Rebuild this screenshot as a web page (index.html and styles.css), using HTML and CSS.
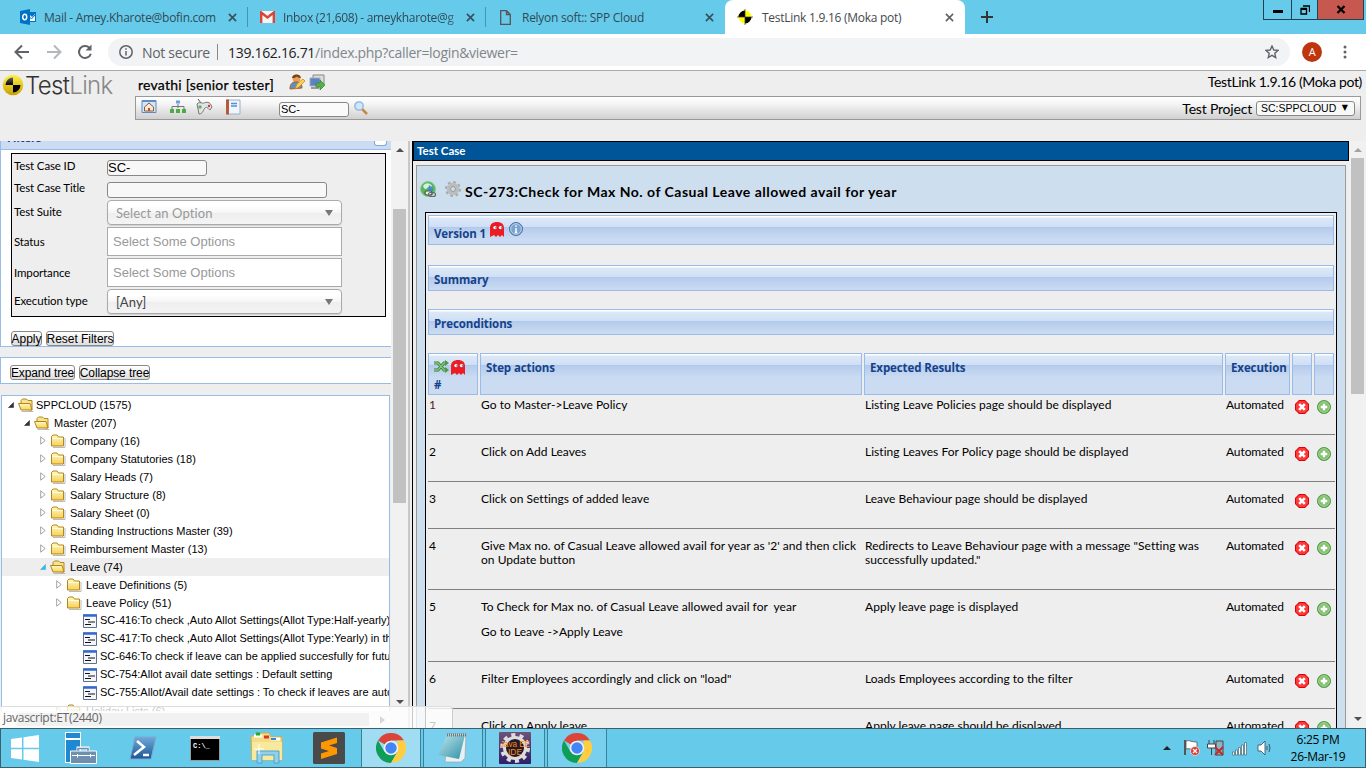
FILE: index.html
```html
<!DOCTYPE html>
<html lang="en">
<head>
<meta charset="utf-8">
<title>TestLink 1.9.16 (Moka pot)</title>
<link rel="stylesheet" href="styles.css">
</head>
<body>
<svg width="0" height="0" class="defs">
<defs>
<linearGradient id="gold" x2="0" y2="1"><stop stop-color="#fffbc0"/><stop offset="1" stop-color="#f7cf58"/></linearGradient>
<linearGradient id="psg" x2="0" y2="1"><stop stop-color="#6fa9da"/><stop offset="1" stop-color="#1b5796"/></linearGradient>
<linearGradient id="note" x2="1" y2="1"><stop stop-color="#bfe8ee"/><stop offset="1" stop-color="#2f8fa5"/></linearGradient>
<linearGradient id="jav" x2="0" y2="1"><stop stop-color="#6d5378"/><stop offset="1" stop-color="#2f1f68"/></linearGradient>
<linearGradient id="yel" x2="0" y2="1"><stop stop-color="#fff04a"/><stop offset="1" stop-color="#c8a000"/></linearGradient>
<linearGradient id="blk" x2="0" y2="1"><stop stop-color="#666"/><stop offset=".5" stop-color="#000"/></linearGradient>
<symbol id="x" viewBox="0 0 10 10"><path d="M1 1l8 8M9 1l-8 8" stroke="currentColor" stroke-width="1.8"/></symbol>
<symbol id="folder" viewBox="0 0 16 16"><path d="M3 14.500h12V5" stroke="#bbb" fill="none"/><path d="M1.500 13V3.500l1.500-1.500h4l1.500 2h5v9H2z" fill="url(#gold)" stroke="#b5851d"/><path d="M2.500 5.500h10.500" stroke="#fffde0"/></symbol>
<symbol id="open" viewBox="0 0 16 16"><path d="M3.500 14.500h12" stroke="#bbb"/><path d="M3 12V3.500l1.500-1.500h4l1.500 1.500h4V13z" fill="#f5e391" stroke="#b5851d"/><path d="M.5 6.500H12l2 6.500H3z" fill="url(#gold)" stroke="#b5851d"/></symbol>
<symbol id="closed" viewBox="0 0 6 9"><path d="M.7.8l4.500 3.700L.7 8.200z" fill="#fff" stroke="#999" stroke-width=".9"/></symbol>
<symbol id="down" viewBox="0 0 6 6"><path d="M5.500.5v5h-5z" fill="currentColor" stroke="currentColor" stroke-width=".6"/></symbol>
<symbol id="case" viewBox="0 0 14 14"><path d="M.5 1h13v12.500H.5z" fill="#f4f6fb" stroke="#5f708c"/><path d="M0 1.500h14" stroke="#3569d0" stroke-width="2.500"/><path d="M2 5.500h5M5 8h7M2 10.500h6" stroke="#111"/></symbol>
<symbol id="ghost" viewBox="0 0 14 15"><path d="M0 15V6C0 2 3 0 7 0s7 2 7 6v9l-2-2-2 2-2-2-2 2-2-2z" fill="#ed1c24"/><circle cx="5" cy="5.600" r="1.700" fill="#fff"/><circle cx="10.500" cy="5.600" r="1.700" fill="#fff"/><path d="M5.300 5h1.500v1.500H5.300zM10.800 5h1.500v1.500h-1.500z" fill="#39a"/></symbol>
<symbol id="del" viewBox="0 0 14 14"><path d="M4 0h6l4 4v6l-4 4H4l-4-4V4z" fill="#e0000c"/><path d="M4.300 1h5.400L13 4.300v5.400L9.700 13H4.300L1 9.700V4.300z" fill="#fb3a3a"/><path d="M4.200 4.200l5.600 5.600M9.800 4.200l-5.600 5.600" stroke="#fff" stroke-width="2.600"/></symbol>
<symbol id="add" viewBox="0 0 14 14"><circle cx="7" cy="7" r="6.600" fill="#5aa648" stroke="#3d8a34" stroke-width=".7"/><circle cx="7" cy="7" r="5.400" fill="#80c16d" stroke="#b6dcaa" stroke-width=".8"/><path d="M7 3.700v6.600M3.700 7h6.600" stroke="#fff" stroke-width="2.400"/></symbol>
<symbol id="chrome" viewBox="0 0 30 30"><path d="M15 15 2 7.500A15 15 0 0 1 28 7.500H15z" fill="#db4437"/><path d="M2 7.500A15 15 0 0 0 15 30l6.500-11.250L15 15 8.500 18.750z" fill="#109d58"/><path d="M28 7.500A15 15 0 0 1 15 30l6.500-11.250V7.500z" fill="#ffcd40"/><circle cx="15" cy="15" r="7.300" fill="#f1f1f1"/><circle cx="15" cy="15" r="5.700" fill="#4285f4"/></symbol>
<symbol id="bmw" viewBox="0 0 16 16"><circle cx="8" cy="8" r="6.500" fill="#ff0"/><path d="M8 8V1.500A6.500 6.500 0 0 0 1.500 8zM8 8v6.500A6.500 6.500 0 0 0 14.500 8z" fill="#000"/><path d="M8 0v16M0 8h16" stroke="#333" stroke-width=".7"/></symbol>
</defs></svg>

<div class="tabs">
  <div class="tab t1"><svg class="fav" width="16" height="16"><path d="M8 3h8v10H8z" fill="#0072c6"/><path d="M9 5l3 3 3-3v7H9z" fill="#fff"/><path d="M9.500 8l2 2 3.500-4" fill="none" stroke="#0072c6"/><path d="M0 2l10-2v16L0 14z" fill="#0072c6"/><ellipse cx="4.700" cy="8" rx="2" ry="2.700" fill="none" stroke="#fff" stroke-width="1.500"/></svg><span class="tt">Mail - Amey.Kharote@bofin.com</span><svg class="cl"><use href="#x"/></svg></div>
  <div class="tab t2"><svg class="fav" width="15" height="12"><path d="M0 0h15v12H0z" fill="#f5f5f5"/><path d="M1.200 12V1.500l6.300 5 6.300-5V12" fill="none" stroke="#db4437" stroke-width="2.400"/></svg><span class="tt fade">Inbox (21,608) - ameykharote@g</span><svg class="cl"><use href="#x"/></svg></div>
  <div class="tab t3"><svg class="fav" width="11" height="15"><path d="M.7.7h5.800l3.800 3.800v9.800H.7zM6.500.7v3.800h3.800" fill="none" stroke="#555" stroke-width="1.300"/></svg><span class="tt">Relyon soft:: SPP Cloud</span><svg class="cl"><use href="#x"/></svg></div>
  <div class="tab t4"><svg class="fav" width="16" height="16"><use href="#bmw"/></svg><span class="tt">TestLink 1.9.16 (Moka pot)</span><svg class="cl"><use href="#x"/></svg></div>
  <svg class="plus" width="12" height="12"><path d="M6 0v12M0 6h12" stroke="#333" stroke-width="2"/></svg>
  <div class="win"><span class="wb w1"><i></i></span><span class="wb w2"><svg width="10" height="10"><path d="M3 1h6.500v6M1 3.500h5.500V9H1z" fill="none" stroke="#000" stroke-width="1.300"/><path d="M1 4h6" stroke="#000" stroke-width="2"/></svg></span><span class="wb w3"><svg width="10" height="9"><path d="M1.500 1l7 7M8.500 1l-7 7" stroke="#000" stroke-width="2.300"/></svg></span></div>
</div>

<div class="toolbar">
  <svg class="nav" width="96" height="18" fill="none" stroke-width="2"><path d="M15 9H2M8 2.500L1.500 9 8 15.500" stroke="#5f6368"/><path d="M33 9h13M40 2.500L46.500 9 40 15.500" stroke="#b5b8bb"/><path d="M75.300 4.700a6 6 0 1 0 1.500 6" stroke="#5f6368"/><path d="M77.500 1.500v6h-6z" fill="#5f6368"/></svg>
  <div class="omni"><svg width="14" height="14"><circle cx="7" cy="7" r="6.200" fill="none" stroke="#5f6368" stroke-width="1.500"/><path d="M7 6v4.500M7 3.300v1.500" stroke="#5f6368" stroke-width="1.500"/></svg><span class="ns">Not secure</span><i></i><span class="url"><b>139.162.16.71</b>/index.php?caller=login&amp;viewer=</span><svg class="star" width="14" height="14"><path d="M7 1l1.800 4 4.200.4-3.200 2.900.9 4.300L7 10.300l-3.700 2.300.9-4.300L1 5.400 5.200 5z" fill="none" stroke="#5f6368" stroke-width="1.400"/></svg></div>
  <span class="avatar">A</span>
  <svg class="dots" width="4" height="14"><circle cx="2" cy="2" r="1.500"/><circle cx="2" cy="7" r="1.500"/><circle cx="2" cy="12" r="1.500"/></svg>
</div>

<div class="head">
  <div class="logo"><svg width="22" height="22"><circle cx="11" cy="11" r="10.300" fill="url(#yel)"/><path d="M11 11V3.500A7.500 7.500 0 0 0 3.500 11zM11 11v7.500a7.500 7.500 0 0 0 7.500-7.500z" fill="url(#blk)"/></svg><span>Test<em>Link</em></span></div>
  <div class="hr">
    <div class="user"><span class="uname">revathi [senior tester]</span>
      <svg width="17" height="17"><circle cx="7.500" cy="4.500" r="4" fill="#e5a15a"/><path d="M3 4c0-4 8-5 9 0-3 0-4-2-5-1S5 4 3 4" fill="#7a4311"/><path d="M1 15c0-6 3-7 6-7s6 1 6 6z" fill="#5a8fd0" stroke="#b05b1c"/><path d="M6 15l2-5 6-5 2 2-6 6z" fill="#fbd354" stroke="#c98a20" stroke-width=".8"/></svg>
      <svg width="17" height="17"><path d="M4 1h11v9H4z" fill="#ddd" stroke="#888"/><path d="M1 4h10v8H1z" fill="#5585c8" stroke="#aaa"/><path d="M2 14h8" stroke="#999" stroke-width="2"/><path d="M7 9h4V6l5 5-5 5v-3H7z" fill="#55b04a" stroke="#338033" stroke-width=".7"/></svg>
      <span class="ver">TestLink 1.9.16 (Moka pot)</span></div>
    <div class="bar">
      <svg width="104" height="18"><path d="M1 1.500h14v12H1z" fill="#d5e4f7" stroke="#6389b8"/><path d="M1 2h14" stroke="#5d8dcb" stroke-width="2"/><path d="M3.500 12V8L8 4l4.500 4v4z" fill="#f8ead4" stroke="#8b5a35"/><path d="M7 9h2v3H7z" fill="#a54"/><path d="M35 1.500h4v3h-4z" fill="#6aa0df"/><path d="M37 5v4M31 10V7.500h12V10" fill="none" stroke="#777"/><path d="M35 10h4v4h-4zM41 10h4v4h-4zM29 10h4v4h-4z" fill="#4aad45"/><path d="M57 0l3 4" stroke="#555"/><path d="M56 5c3-3 5 0 7-1s6-2 8 4l-2 3c-2-1-3-4-5-2s-2 6-6 6z" fill="#e3e3e3" stroke="#777"/><path d="M59 6v4M57 8h4" stroke="#3aa24a"/><circle cx="68" cy="7" r="1.200" fill="#c33"/><path d="M86 1h13v14H86z" fill="#eef5ff" stroke="#9bb0ca"/><path d="M85 .5h3v15h-3z" fill="#b65a3a"/><path d="M90 4.500h6M90 7h6" stroke="#5d8dcb" stroke-width="1.500"/></svg>
      <span class="sc">SC-</span>
      <svg width="14" height="14"><path d="M8 8l5 5" stroke="#c9883f" stroke-width="2.500"/><circle cx="5" cy="5" r="4.200" fill="#cfe6fb" stroke="#8eb3e0" stroke-width="1.300"/></svg>
      <span class="tp">Test Project</span><span class="proj">SC:SPPCLOUD <b>▼</b></span>
    </div>
  </div>
</div>

<div class="main">
  <div class="left">
    <div class="pane">
      <div class="fh"><span>Filters</span><i></i></div>
      <div class="filters">
        <div class="fbox">
          <div class="fr a"><label>Test Case ID</label><span class="in s">SC-</span></div>
          <div class="fr b"><label>Test Case Title</label><span class="in"></span></div>
          <div class="fr c"><label>Test Suite</label><span class="sel">Select an Option<i></i></span></div>
          <div class="fr d"><label>Status</label><span class="multi">Select Some Options</span></div>
          <div class="fr d"><label>Importance</label><span class="multi">Select Some Options</span></div>
          <div class="fr c"><label>Execution type</label><span class="sel any">[Any]<i></i></span></div>
        </div>
        <div class="btns"><span class="btn w31">Apply</span><span class="btn w68">Reset Filters</span></div>
      </div>
      <div class="treebar"><span class="btn w65">Expand tree</span><span class="btn w71">Collapse tree</span></div>
      <div class="tree">
        <div class="n l0"><svg class="dn"><use href="#down"/></svg><svg class="fo"><use href="#open"/></svg>SPPCLOUD (1575)</div>
        <div class="n l1"><svg class="dn"><use href="#down"/></svg><svg class="fo"><use href="#open"/></svg><span>Master (207)</span></div>
        <div class="n l2"><svg class="ar"><use href="#closed"/></svg><svg class="fo"><use href="#folder"/></svg>Company (16)</div>
        <div class="n l2"><svg class="ar"><use href="#closed"/></svg><svg class="fo"><use href="#folder"/></svg>Company Statutories (18)</div>
        <div class="n l2"><svg class="ar"><use href="#closed"/></svg><svg class="fo"><use href="#folder"/></svg>Salary Heads (7)</div>
        <div class="n l2"><svg class="ar"><use href="#closed"/></svg><svg class="fo"><use href="#folder"/></svg>Salary Structure (8)</div>
        <div class="n l2"><svg class="ar"><use href="#closed"/></svg><svg class="fo"><use href="#folder"/></svg>Salary Sheet (0)</div>
        <div class="n l2"><svg class="ar"><use href="#closed"/></svg><svg class="fo"><use href="#folder"/></svg>Standing Instructions Master (39)</div>
        <div class="n l2"><svg class="ar"><use href="#closed"/></svg><svg class="fo"><use href="#folder"/></svg>Reimbursement Master (13)</div>
        <div class="n l2 hot"><svg class="dn"><use href="#down"/></svg><svg class="fo"><use href="#open"/></svg>Leave (74)</div>
        <div class="n l3"><svg class="ar"><use href="#closed"/></svg><svg class="fo"><use href="#folder"/></svg>Leave Definitions (5)</div>
        <div class="n l3"><svg class="ar"><use href="#closed"/></svg><svg class="fo"><use href="#folder"/></svg>Leave Policy (51)</div>
        <div class="n l4"><svg class="ca"><use href="#case"/></svg>SC-416:To check ,Auto Allot Settings(Allot Type:Half-yearly)</div>
        <div class="n l4"><svg class="ca"><use href="#case"/></svg>SC-417:To check ,Auto Allot Settings(Allot Type:Yearly) in th</div>
        <div class="n l4"><svg class="ca"><use href="#case"/></svg>SC-646:To check if leave can be applied succesfully for futu</div>
        <div class="n l4"><svg class="ca"><use href="#case"/></svg>SC-754:Allot avail date settings : Default setting</div>
        <div class="n l4"><svg class="ca"><use href="#case"/></svg>SC-755:Allot/Avail date settings : To check if leaves are auto</div>
        <div class="n l3"><svg class="ar"><use href="#closed"/></svg><svg class="fo"><use href="#folder"/></svg>Holiday Lists (6)</div>
      </div>
      <div class="hscroll"><b></b><i></i></div>
    </div>
    <div class="scroll sl"><i class="up"></i><b></b><i class="dw"></i></div>
  </div>
  <div class="right">
    <div class="work">
      <h1>Test Case</h1>
      <div class="panel">
        <div class="title">
          <svg width="17" height="17"><circle cx="8" cy="8" r="7.500" fill="#58b55c" stroke="#8fcf92"/><path d="M3 5c3-4 7-3 9 0-2 3-4 0-5 2S4 8 3 5" fill="#d5efe2"/><path d="M9 4l4 3v3H8z" fill="#3f8fd0"/><rect x="5" y="10" width="7" height="4" rx="2" fill="#eee" stroke="#555" stroke-width="1.200"/><rect x="8.500" y="11.500" width="7" height="4" rx="2" fill="none" stroke="#666" stroke-width="1.200"/></svg>
          <svg width="17" height="17"><circle cx="8" cy="8" r="6.700" fill="none" stroke="#aaa" stroke-width="2.600" stroke-dasharray="2.600 2.660"/><circle cx="8" cy="8" r="4.500" fill="none" stroke="#bdbdbd" stroke-width="3.500"/><circle cx="8" cy="8" r="2.500" fill="#cddeee" stroke="#888" stroke-width=".8"/></svg>
          <span>SC-273:Check for Max No. of Casual Leave allowed avail for year</span></div>
        <div class="box">
          <div class="x v"><span>Version 1</span><svg width="14" height="15"><use href="#ghost"/></svg><svg width="14" height="14"><circle cx="7" cy="7" r="6.500" fill="#5482b8" stroke="#4472a8"/><circle cx="7" cy="7" r="5.400" fill="#7ba3d0" stroke="#d9e7f5" stroke-width=".8"/><path d="M7 6v4.500M7 3.300v1.500M5.800 10.500h2.500" stroke="#fff" stroke-width="1.500"/></svg></div>
          <div class="x su"><span>Summary</span></div>
          <div class="x pr"><span>Preconditions</span></div>
          <div class="g gh">
            <div class="x"><svg width="15" height="13" fill="none"><path d="M0 3h4l6 7h3M0 10h4l6-7h3" stroke="#347c30" stroke-width="3"/><path d="M0 3h4l6 7h3M0 10h4l6-7h3" stroke="#87c87c" stroke-width="1.300"/><path d="M11 0l4 3-4 3zM11 7l4 3-4 3z" fill="#4a9b45"/></svg><svg width="14" height="15"><use href="#ghost"/></svg><br><span>#</span></div>
            <div class="x"><span>Step actions</span></div><div class="x"><span>Expected Results</span></div><div class="x"><span>Execution</span></div><div class="x"></div><div class="x"></div>
          </div>
          <div class="g r first"><p><u>1</u></p><p>Go to Master-&gt;Leave Policy</p><p>Listing Leave Policies page should be displayed</p><p class="au">Automated</p><svg><use href="#del"/></svg><svg><use href="#add"/></svg></div>
          <div class="g r"><p>2</p><p>Click on Add Leaves</p><p>Listing Leaves For Policy page should be displayed</p><p class="au">Automated</p><svg><use href="#del"/></svg><svg><use href="#add"/></svg></div>
          <div class="g r"><p>3</p><p>Click on Settings of added leave</p><p>Leave Behaviour page should be displayed</p><p class="au">Automated</p><svg><use href="#del"/></svg><svg><use href="#add"/></svg></div>
          <div class="g r r4"><p>4</p><p>Give Max no. of Casual Leave allowed avail for year as '2' and then click<br>on Update button</p><p>Redirects to Leave Behaviour page with a message "Setting was<br>successfully updated."</p><p class="au">Automated</p><svg><use href="#del"/></svg><svg><use href="#add"/></svg></div>
          <div class="g r r5"><p>5</p><div><p>To Check for Max no. of Casual Leave allowed avail for&nbsp; year</p><p class="p2">Go to Leave -&gt;Apply Leave</p></div><p>Apply leave page is displayed</p><p class="au">Automated</p><svg><use href="#del"/></svg><svg><use href="#add"/></svg></div>
          <div class="g r"><p>6</p><p>Filter Employees accordingly and click on "load"</p><p>Loads Employees according to the filter</p><p class="au">Automated</p><svg><use href="#del"/></svg><svg><use href="#add"/></svg></div>
          <div class="g r"><p>7</p><p>Click on Apply leave</p><p>Apply leave page should be displayed</p><p class="au">Automated</p><svg><use href="#del"/></svg><svg><use href="#add"/></svg></div>
        </div>
      </div>
    </div>
    <div class="scroll sr"><i class="up"></i><b></b><i class="dw"></i></div>
  </div>
  <div class="status">javascript:ET(2440)</div>
</div>

<div class="task">
  <div class="start"><svg width="28" height="27"><path d="M0 4l11-1.500v10.300H0zM12.500 2.200L28 0v12.800H12.500zM0 14.200h11v10.300L0 23zM12.500 14.200H28V27l-15.500-2.200z" fill="#fff"/></svg></div>
  <div class="slot"><svg width="32" height="32"><path d="M0 0h16v31H0z" fill="#fff"/><path d="M1 1h14v5H1zM1 8h14v22H1z" fill="#1e88d2"/><path d="M5.500 19h26v12.500h-26z" fill="#6e8fae" stroke="#fff"/><path d="M13 19v-3h10v3" fill="none" stroke="#fff" stroke-width="3"/><path d="M13 19v-2.500h10V19" fill="none" stroke="#6e8fae" stroke-width="1.500"/><path d="M7 23.500h23M12.500 22v3.500M25.500 22v3.500" stroke="#fff"/></svg></div>
  <div class="slot"><svg width="28" height="24"><path d="M6 1h21l-5 22H1z" fill="url(#psg)" stroke="#7cabcf"/><path d="M8 5l7 6-10 8M14 19h6" fill="none" stroke="#fff" stroke-width="2.500"/></svg></div>
  <div class="slot"><svg width="30" height="25"><path d="M0 0h30v25H0z" fill="#999"/><path d="M1 3h28v21H1z" fill="#000"/><path d="M0 1.500h30" stroke="#ddd" stroke-width="3"/><text x="3" y="12" class="cmd">C:\_</text></svg></div>
  <div class="slot"><svg width="34" height="32"><path d="M1 4h8l2-3h8l2 4h11v23H2z" fill="#f4dc82" stroke="#d3ad48"/><path d="M4 4h8M21 7h9" stroke="#fff" stroke-width="3"/><path d="M6 2h4" stroke="#2ba52b" stroke-width="3"/><path d="M14 5h5" stroke="#d8382b" stroke-width="3"/><path d="M21 7h5" stroke="#2e8ae0" stroke-width="2"/><path d="M2 10h30v18H2z" fill="#f9e99f"/><path d="M7 31V19h22v12h-5v-8H12v8z" fill="#8fd0ee" stroke="#4fa3cb"/><path d="M9 12v10M4 17h10" stroke="#fff"/></svg></div>
  <div class="slot"><svg width="32" height="32"><rect width="32" height="32" rx="1.500" fill="#4a4a4a"/><path d="M24 5.500L8 10.500v6l8 2.500-8 2.500v5.500l16-5v-6L16 13.500l8-2.500z" fill="#ff9800"/></svg></div>
  <div class="slot app act"><svg width="30" height="30"><use href="#chrome"/></svg></div>
  <div class="slot app"><svg width="32" height="32"><path d="M11 2h18l-1 24-4 4H8z" fill="#e9f0f2" stroke="#999" stroke-width=".6"/><path d="M10 3h18l-6 24-21-4z" fill="url(#note)"/><path d="M10 3h19" stroke="#777" stroke-width="3" stroke-dasharray="1 1"/></svg></div>
  <div class="slot app"><svg width="32" height="32"><rect width="32" height="32" rx="1" fill="url(#jav)"/><circle cx="16" cy="16" r="13" fill="none" stroke="#ddd" stroke-width="4" stroke-dasharray="4 4.170"/><circle cx="16" cy="16" r="10.500" fill="#221b25" stroke="#ddd" stroke-width="3"/><text x="1" y="15" class="jv" textLength="30" lengthAdjust="spacingAndGlyphs">Java EE</text><text x="9" y="23" class="jv" textLength="14" lengthAdjust="spacingAndGlyphs">IDE</text></svg></div>
  <div class="slot app"><svg width="30" height="30"><use href="#chrome"/></svg></div>
  <svg class="tray" width="90" height="18"><path d="M0 11l4-4 4 4z" fill="#222"/><path d="M22 1v15" stroke="#555" stroke-width="2"/><path d="M23 2c4-1 5 1 11 1v8c-5 0-6-2-11-1z" fill="#fff" stroke="#555" stroke-width=".8"/><circle cx="32" cy="12" r="4.500" fill="#dd3d35" stroke="#fff" stroke-width=".6"/><path d="M30 10l4 4M34 10l-4 4" stroke="#fff" stroke-width="1.300"/><path d="M46 1v4M51 1v4M44.500 5h8v4h-8zM48.500 9v7" fill="#fff" stroke="#444"/><path d="M53 2h7v14h-7z" fill="#8eb4c2" stroke="#444"/><path d="M52 8l8 8M60 8l-8 8" stroke="#c5282c" stroke-width="2"/><path d="M69.500 13h2v3h-2zM72.500 11h2v5h-2zM75.500 8.500h2V16h-2zM78.500 6h2v10h-2zM81.500 3.500h2V16h-2z" fill="#fff" stroke="#4a6570" stroke-width=".7"/></svg>
  <svg class="spk" width="14" height="16"><path d="M1 5h3l4-4v14l-4-4H1z" fill="#fff" stroke="#456" stroke-width=".9"/><path d="M10 6v4M12 4q2 4 0 8" fill="none" stroke="#456"/></svg>
  <div class="clock"><span>6:25 PM</span><span>26-Mar-19</span></div>
</div>
</body>
</html>
```
FILE: styles.css
```css
*{box-sizing:border-box}
body{margin:0;width:1366px;height:768px;overflow:hidden;display:flex;flex-direction:column;background:#eee;color:#000;font-family:Lato,"Open Sans",sans-serif;font-size:12px}
svg{flex:none;display:block}
.defs{position:absolute}
h1,p{margin:0;font-weight:400}

/* browser tabs */
.tabs{height:34px;background:#66caea;display:flex;align-items:center;font-family:"Open Sans",sans-serif;font-size:12px;letter-spacing:-.27px;color:#2f4a55;flex:none}
.tab{display:flex;align-items:center;height:34px;white-space:nowrap}
.tab .tt{margin-left:8px;flex:1}
.cl{width:9px;height:9px;color:#38505a}
.fav{flex:none}
.t1{width:217px;margin-left:20px}
.t2{width:228px;margin-left:10px;border-left:1px solid #4595af;padding-left:12px;height:20px}
.t3{width:229px;margin-left:10px;border-left:1px solid #4595af;padding-left:14px;height:20px}
.t3 .tt{margin-left:11px}
.fade{-webkit-mask-image:linear-gradient(90deg,#000 92%,transparent 102%);letter-spacing:-.33px;margin-right:5px}
.t4{width:240px;margin-left:11px;background:#fff;border-radius:8px 8px 0 0;padding:0 11px 0 12px;color:#45494d}
.t4 .tt{margin-left:9px}
.t4 .cl{color:#5f6368}
.plus{margin-left:16px}
.win{display:flex;margin-left:auto;margin-right:2px;align-self:flex-start}
.wb{height:20px;border:1px solid #23424e;border-top:0;border-left-width:0;display:flex;align-items:center;justify-content:center}
.w1{width:29px;border-left-width:1px}.w1 i{width:10px;height:3px;background:#000;margin-top:4px}
.w2{width:26px}.w3{width:46px;background:#c75850}

/* address bar */
.toolbar{height:36px;background:#fff;display:flex;align-items:center;flex:none;font-family:"Open Sans",sans-serif;font-size:14px;letter-spacing:-.31px}
.nav{margin-left:14px;margin-right:-2px}
.omni{width:1182px;height:28px;border-radius:14px;background:#f1f3f4;display:flex;align-items:center;padding:0 11px;color:#5f6368}
.ns{margin-left:9px;width:67px;white-space:nowrap}
.omni i{width:1px;height:16px;background:#888;margin:0 10px 0 8px}
.url{color:#80868b;white-space:nowrap}.url b{font-weight:400;color:#202124}
.star{margin-left:auto}
.avatar{width:20px;height:20px;border-radius:50%;background:#bf360c;color:#fff;font-size:11px;text-align:center;line-height:20px;margin-left:12px}
.dots{margin-left:21px;fill:#5f6368}

/* TestLink header */
.head{height:71px;border-top:1px solid #aaa;display:flex;flex:none}
.logo{width:135px;display:flex;align-items:flex-start;padding:3px 0 0 2px}
.logo span{font:24px/24px Inter,sans-serif;font-weight:300;color:#333;margin-left:1px;letter-spacing:-.65px}
.logo em{font-style:normal;color:#888}
.hr{flex:1;font-size:14px}
.user{height:25px;display:flex;align-items:center;padding:0 4px 3px 3px}
.uname{width:151px;-webkit-text-stroke:.25px;padding-top:5px;white-space:nowrap;letter-spacing:.24px}
.user svg{margin-right:3px}
.ver{margin:-1px 0 0 auto;white-space:nowrap;letter-spacing:-.35px}
.bar{height:24px;width:1226px;border:1px solid #999;background:linear-gradient(#fff,#f3f3f3 35%,#d0d0d0);display:flex;align-items:center;padding:0 5px 0 5px}
.bar svg{margin-top:-1px}
.sc{width:70px;height:15px;border:1px solid #888;border-radius:3px;background:#fafafa;font:11px/13px "Liberation Sans",sans-serif;padding-left:1px;margin:2px 5px 0 34px}
.tp{margin-left:auto;margin-right:4px;letter-spacing:-.2px}
.proj{width:99px;height:15px;border:1px solid #888;border-radius:3px;background:#f8f8f8;font:10.500px/13px "Liberation Sans",sans-serif;padding-left:4px;display:flex;justify-content:space-between;padding-right:6px;white-space:nowrap}
.proj b{font:8px/12px "DejaVu Sans",sans-serif}

/* frames */
.main{height:587px;display:flex;position:relative;overflow:hidden;flex:none}
.left{width:410px;display:flex;border-right:2px solid #c8c8c8;flex:none}
.pane{width:391px;overflow:hidden}
.fh{height:9px;background:#cbdcf2;border-bottom:1px solid #99bbe8;border-left:1px solid #99bbe8;overflow:hidden;display:flex;justify-content:space-between;font:bold 11px/13px "Open Sans",sans-serif;color:#15428b;padding:0 4px 0 6px}
.fh span{margin-top:-10px}.fh i{width:13px;height:5px;background:#fff;border:1px solid #7fa8df;border-top:0;border-radius:0 0 3px 3px}
.filters{height:197px;background:#fff;border:1px solid #99bbe8;border-top:0;border-right:0;padding:3px 0 0 10px}
.fbox{width:375px;height:164px;border:1px solid #000;background:#eee;padding:1px 2px;font-size:11.500px}
.fr{display:flex}.fr label{width:93px;white-space:nowrap;letter-spacing:-.13px}
.a{height:22px;padding-top:5px}.b{height:24px;padding-top:5px}.c{height:29px}.d{height:31px}
.a label,.b label{margin-top:-1px}.c label{margin-top:4px}.d label{margin-top:5px}
.in{width:220px;height:16px;border:1px solid #888;border-radius:3px;background:#f8f8f8;font:13px/14px "Liberation Sans",sans-serif}
.in.s{width:100px}
.sel{width:235px;height:25px;border:1px solid #aaa;border-radius:4px;background:linear-gradient(#fff 20%,#f6f6f6 50%,#eee 52%,#f4f4f4);box-shadow:0 1px 1px rgba(0,0,0,.12);display:flex;justify-content:space-between;align-items:center;color:#999;font-size:13px;padding:0 8px;letter-spacing:.1px}
.any{color:#444}
.fr.c .sel{margin-top:-1px}
.sel i{border:4px solid transparent;border-top:6px solid #777;border-bottom:0}
.multi{width:235px;height:29px;border:1px solid #aaa;background:#fff;color:#999;font:13px/27px "Liberation Sans",sans-serif;padding-left:5px;margin-top:-3px}
.fr.d+.c .sel{margin-top:-3px}.fr.d+.c label{margin-top:2px}
.btns{display:flex;gap:4px;margin-top:14px}
.btn{height:15px;border:1px solid #888;border-radius:3px;background:linear-gradient(#fff,#ddd);font:12px/14px "Liberation Sans",sans-serif;display:flex;justify-content:center;white-space:nowrap;letter-spacing:-.03px}
.w31{width:31px}.w68{width:68px}.w65{width:65px;letter-spacing:-.15px}.w71{width:71px;letter-spacing:-.1px}
.treebar{margin-top:10px;height:27px;border:1px solid #99bbe8;border-right:0;background:#fff;display:flex;gap:4px;padding:7px 0 0 9px}
.tree{margin-top:11px;width:389px;margin-left:1px;height:316px;border:1px solid #99bbe8;border-bottom:0;background:#fff;font:11px/18px "Liberation Sans",sans-serif;overflow:hidden;white-space:nowrap}
.n{height:18px;display:flex;align-items:center;padding-bottom:1px}
.fo{width:16px;height:16px}.ar{width:6px;height:9px}.dn{width:6px;height:6px;color:#333}.ca{width:14px;height:14px;margin:2px 3px 0 0}
.l0{padding-left:6px}.l1{padding-left:22px}.l2{padding-left:38px}.l3{padding-left:54px}.l4{padding-left:81px;padding-bottom:2px}
.dn,.ar{margin-right:4px}.fo{margin-right:4px}.l0 .fo{margin-right:2px}.l1 .fo{margin-right:4px}
.l2,.l3{letter-spacing:.02px}
.hot{background:#eee}.hot .dn{color:#35b5e8}
.hscroll{height:17px;background:#f1f1f1;display:flex;align-items:center;padding-left:17px}
.hscroll b{width:352px;height:13px;background:#c1c1c1}
.hscroll i{margin-left:11px;border:4px solid transparent;border-left:5px solid #505050;border-right:0}
.scroll{background:#f1f1f1;width:17px;display:flex;flex-direction:column;align-items:center}
.scroll b{width:13px;background:#c1c1c1}
.up{border:4px solid transparent;border-top:0;border-bottom:4px solid #505050}
.dw{border:4px solid transparent;border-bottom:0;border-top:4px solid #505050;margin-top:auto}
.sl .up{margin-top:7px}.sl b{height:294px;margin-top:57px}.sl .dw{margin-bottom:24px}

.right{flex:1;display:flex;border-left:1px solid #000;margin-left:2px}
.work{width:936px;overflow:hidden}
h1{height:20px;border:1px solid #000;background:#059;color:#fff;font-size:11.500px;font-weight:700;line-height:18px;padding-left:3px}
.panel{margin:4px 3px 0;border:1px solid #999;background:#cddeee;height:600px;padding:0 8px}
.title{display:flex;height:46px;margin-left:-5px;padding-top:15px;font-size:14px;font-weight:700;white-space:nowrap}
.title svg:nth-child(2){margin:0 3px 0 8px}.title span{margin-top:2px;letter-spacing:.49px}
.box{border:1px solid #000;background:#eee;height:560px;padding:2px}
.x{border:1px solid #99bbe8;background:linear-gradient(#fff 1px,#dce8f7 2px,#cfdff4 11px,#a9c7ef 11px,#b6ccec 12px,#cbdcf2 24px);color:#15428b;font:bold 11.500px/17px "Open Sans",sans-serif;letter-spacing:-.1px;padding-left:5px;white-space:nowrap}
.v{height:30px;display:flex}.v span{margin:9px 4px 0 0}.v svg{margin:6px 5px 0 0}
.su{height:26px;margin-top:20px;padding-top:5px}.pr{height:26px;margin-top:18px;padding-top:5px}
.g{display:grid;grid-template-columns:50px 382px 359px 65px 20px 20px;column-gap:2px}
.gh{margin-top:18px}.gh .x{height:42px;padding-top:5px}
.gh svg{display:inline-block;vertical-align:top;margin:1px 2px 0 0}
.r{height:47px;border-bottom:1px solid #808080;padding:10px 0 0 1px;line-height:14px;white-space:nowrap;margin-right:-1px;letter-spacing:.03px}
.r svg{width:14px;height:14px;margin:2px 0 0 2px}
.r.first{height:40px;padding-top:3px}.r u{text-decoration:none;color:#522}
.au{letter-spacing:-.1px}
.r4{height:61px}.r5{height:72px}.p2{margin-top:11px}
.sr .up{margin-top:7px;border-bottom-color:#a3a3a3}.sr b{height:236px;margin-top:6px}.sr .dw{margin-bottom:7px}
.status{position:absolute;left:0;bottom:0;width:453px;height:22px;background:rgba(255,255,255,.78);border-radius:0 4px 0 0;border-right:1px solid #ccc;border-top:1px solid #ddd;font:12px/22px "Open Sans",sans-serif;letter-spacing:-.3px;color:#666;padding-left:3px}

/* taskbar */
.task{height:40px;background:#66caea;border:1px solid #3d5f6b;display:flex;align-items:center;flex:none;padding-right:5px}
.start{width:50px;padding-left:10px}
.slot{width:60px;height:38px;display:flex;align-items:center;justify-content:center;margin-right:2px}
.app{border:1px solid #3b8199;border-width:0 1px;background:#78d0ee}
.act{background:#a0dcf2}
.cmd{font:bold 7px "Liberation Mono",monospace;fill:#fff}
.jv{font:9.500px "Liberation Sans",sans-serif;fill:#ff8a1c}
.tray{margin-left:auto}
.spk{margin-left:4px}
.clock{display:flex;flex-direction:column;width:84px;align-items:center;font:12px/17px "Open Sans",sans-serif;letter-spacing:-.3px;margin-left:5px}
```
